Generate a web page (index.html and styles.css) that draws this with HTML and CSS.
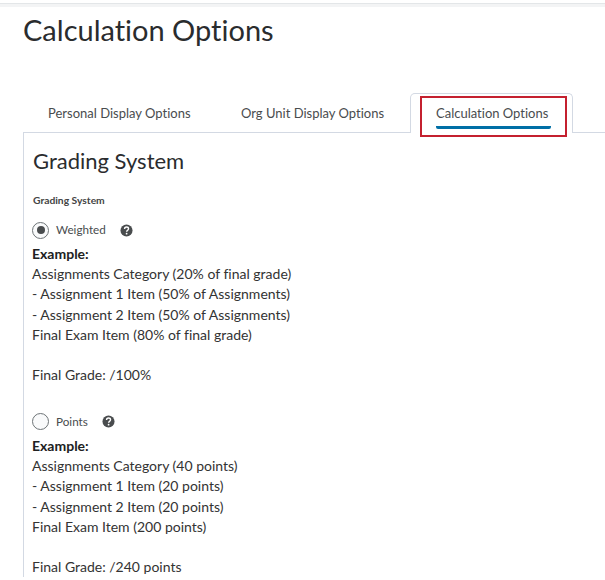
FILE: index.html
```html
<!doctype html>
<html lang="en">

<head>
    <meta charset="utf-8">
    <title>Calculation Options</title>
    <link rel="stylesheet" href="styles.css">
</head>

<body>
    <div class="topline"></div>
    <h1 class="title">Calculation Options</h1>

    <div class="tabs">
        <div class="tab">Personal Display Options</div>
        <div class="tab">Org Unit Display Options</div>
        <div class="tab active">
            <div class="highlight">
                <span class="tab-label">Calculation Options</span>
            </div>
        </div>
        <div class="tabs-rest"></div>
    </div>

    <div class="panel">
        <h2 class="heading">Grading System</h2>
        <div class="field-label">Grading System</div>

        <div class="radio-row">
            <span class="radio checked"></span>
            <span class="radio-label">Weighted</span>
            <svg class="help help-weighted" viewBox="0 0 14 14">
                <circle cx="7" cy="7" r="6.5" fill="#494c4e"/>
                <path d="M4.9 5.4c0-1.3 1-2.1 2.2-2.1s2.1.8 2.1 1.9c0 1.7-2.1 1.7-2.1 3.2" fill="none" stroke="#fff" stroke-width="1.5"/>
                <circle cx="7.1" cy="10.4" r="0.95" fill="#fff"/>
            </svg>
        </div>
        <div class="example">
            <b>Example:</b><br>
            Assignments Category (20% of final grade)<br>
            - Assignment 1 Item (50% of Assignments)<br>
            - Assignment 2 Item (50% of Assignments)<br>
            Final Exam Item (80% of final grade)<br>
            <br>
            Final Grade: /100%
        </div>

        <div class="radio-row">
            <span class="radio"></span>
            <span class="radio-label">Points</span>
            <svg class="help help-points" viewBox="0 0 14 14">
                <circle cx="7" cy="7" r="6.5" fill="#494c4e"/>
                <path d="M4.9 5.4c0-1.3 1-2.1 2.2-2.1s2.1.8 2.1 1.9c0 1.7-2.1 1.7-2.1 3.2" fill="none" stroke="#fff" stroke-width="1.5"/>
                <circle cx="7.1" cy="10.4" r="0.95" fill="#fff"/>
            </svg>
        </div>
        <div class="example">
            <b>Example:</b><br>
            Assignments Category (40 points)<br>
            - Assignment 1 Item (20 points)<br>
            - Assignment 2 Item (20 points)<br>
            Final Exam Item (200 points)<br>
            <br>
            Final Grade: /240 points
        </div>
    </div>
</body>

</html>
```

FILE: styles.css
```css
html {
    height: 100%;
    overflow: hidden;
}

body {
    margin: 0;
    height: 100%;
    overflow: hidden;
    background: #fff;
    font-family: Lato, sans-serif;
    font-variant-ligatures: none;
    color: #202122;
}

.topline {
    height: 3px;
    margin-top: 3px;
    background: #f3f4f5;
    border-top: 1px solid #e3e6e8;
}

.title {
    margin: 0 0 0 23px;
    padding-top: 3px;
    font-size: 29px;
    line-height: 40px;
    font-weight: 400;
    color: #2a2c2e;
}

.tabs {
    display: flex;
    align-items: flex-end;
    height: 40px;
    margin: 43px 0 0 23px;
}

.tab {
    height: 39px;
    line-height: 39px;
    width: 199px;
    box-sizing: border-box;
    padding-left: 25px;
    font-size: 13px;
    color: #494c4e;
    border-bottom: 1px solid #d3d9e3;
}

.tab + .tab {
    width: 188px;
    padding-left: 19px;
}

.tab.active {
    width: 163px;
    height: 40px;
    padding: 2px 5px 0 9px;
    border: 1px solid #d3d9e3;
    border-bottom: none;
    border-radius: 5px 5px 0 0;
}

.highlight {
    height: 41px;
    box-sizing: border-box;
    border: 2px solid #c4202f;
    padding: 0 14px;
    background: #fff;
    position: relative;
}

.tab-label {
    display: block;
    height: 28px;
    line-height: 30px;
    border-bottom: 3px solid #006fa6;
    border-radius: 0 0 2px 2px;
    white-space: nowrap;
}

.tabs-rest {
    flex: 1;
    height: 39px;
    border-bottom: 1px solid #d3d9e3;
}

.panel {
    margin-left: 23px;
    padding: 12px 0 0 8px;
    border-left: 1px solid #d3d9e3;
}

.heading {
    margin: 0 0 0 1px;
    font-size: 22px;
    line-height: 32px;
    font-weight: 400;
    color: #2a2c2e;
}

.field-label {
    margin: 15px 0 0 1px;
    font-size: 10.3px;
    line-height: 16px;
    font-weight: 700;
    color: #444;
}

.radio-row {
    display: flex;
    align-items: center;
    height: 20px;
    margin: 12px 0 0;
    font-size: 11.7px;
    color: #494c4e;
}

.radio {
    width: 15px;
    height: 15px;
    border: 1px solid #6e7477;
    border-radius: 50%;
    background: #f9fafb;
    display: flex;
    align-items: center;
    justify-content: center;
}

.radio.checked::after {
    content: "";
    width: 8px;
    height: 8px;
    border-radius: 50%;
    background: #494c4e;
}

.radio-label {
    margin: -2px 0 0 7px;
}

.help {
    width: 13px;
    height: 13px;
}

.help-weighted {
    margin-left: 14px;
}

.help-points {
    margin-left: 14px;
}

.example {
    margin-top: 4px;
    margin-bottom: 26.5px;
    font-size: 14px;
    line-height: 20.2px;
    color: #333;
}

.example b {
    color: #202122;
}
```
